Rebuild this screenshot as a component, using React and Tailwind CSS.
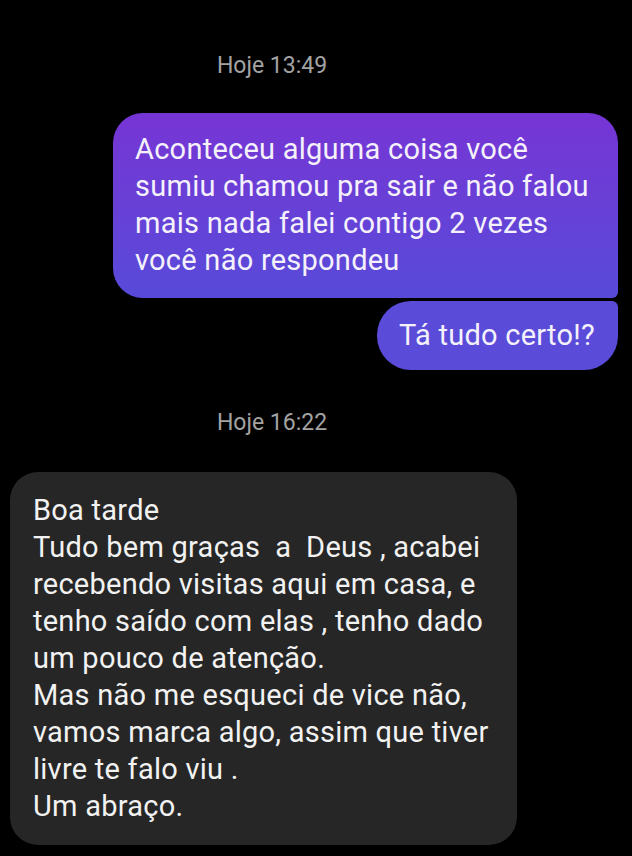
export default function App() {
  const received = [
    "Boa tarde",
    "Tudo bem graças  a  Deus , acabei",
    "recebendo visitas aqui em casa, e",
    "tenho saído com elas , tenho dado",
    "um pouco de atenção.",
    "Mas não me esqueci de vice não,",
    "vamos marca algo, assim que tiver",
    "livre te falo viu .",
    "Um abraço.",
  ];
  const sent = [
    "Aconteceu alguma coisa você",
    "sumiu chamou pra sair e não falou",
    "mais nada falei contigo 2 vezes",
    "você não respondeu",
  ];
  return (
    <div className="min-h-[856px] w-[632px] bg-black pt-[51px] font-['Roboto',sans-serif] overflow-hidden">
      <div className="flex justify-center pr-[88px] h-[30px] items-center text-[23px] text-[#a3a3a3]">
        Hoje 13:49
      </div>
      <div className="flex flex-col items-end pr-[14px] mt-[32px] gap-[3px]">
        <div className="w-[505px] rounded-[30px] rounded-br-[6px] bg-gradient-to-b from-[#7634d4] to-[#574ad9] pl-[22px] pt-[18px] pb-[19px] text-[29px] tracking-[0.25px] leading-[37px] text-[#f4f1fb] whitespace-pre">
          {sent.map((l, i) => (
            <div key={i}>{l}</div>
          ))}
        </div>
        <div className="w-[241px] h-[69px] rounded-[34px] rounded-tr-[6px] bg-[#5a4cd9] pl-[22px] flex items-center text-[29px] tracking-[0.25px] leading-[37px] text-[#f4f1fb] whitespace-pre">
          Tá tudo certo!?
        </div>
      </div>
      <div className="flex justify-center pr-[88px] h-[30px] items-center mt-[38px] text-[23px] text-[#a3a3a3]">
        Hoje 16:22
      </div>
      <div className="ml-[10px] mt-[34px] w-[507px] rounded-[28px] bg-[#262626] pl-[23px] pt-[20px] pb-[20px] text-[29px] tracking-[0.25px] leading-[37px] text-[#f2f2f2] whitespace-pre">
        {received.map((l, i) => (
          <div key={i}>{l}</div>
        ))}
      </div>
    </div>
  );
}
